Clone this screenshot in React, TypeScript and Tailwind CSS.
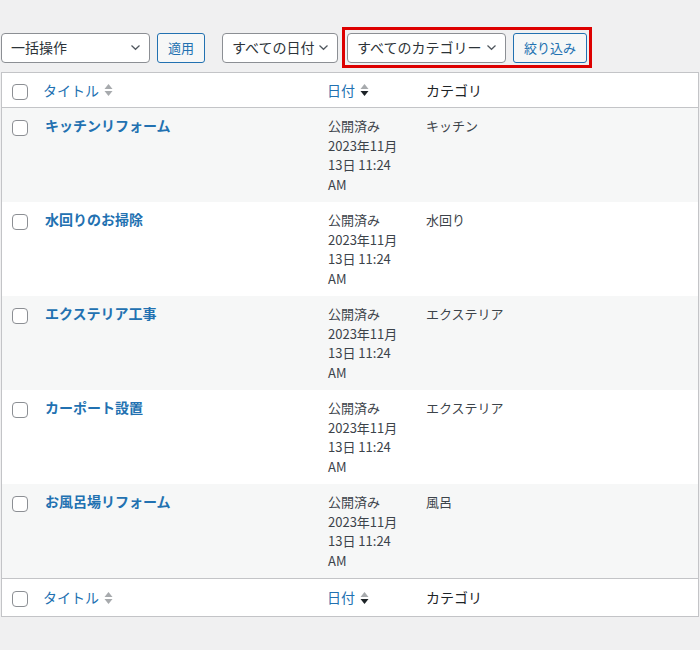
import React from "react";

const font = { fontFamily: '"Noto Sans CJK JP", "Noto Sans", sans-serif' };

type Post = { title: string; category: string };

const posts: Post[] = [
  { title: "キッチンリフォーム", category: "キッチン" },
  { title: "水回りのお掃除", category: "水回り" },
  { title: "エクステリア工事", category: "エクステリア" },
  { title: "カーポート設置", category: "エクステリア" },
  { title: "お風呂場リフォーム", category: "風呂" },
];

function Chevron() {
  return (
    <svg width="11" height="7" viewBox="0 0 11 7" className="shrink-0">
      <path d="M1.5 1.5 L5.5 5.3 L9.5 1.5" fill="none" stroke="#50575e" strokeWidth="1.2" />
    </svg>
  );
}

function Select({ label, width }: { label: string; width: string }) {
  return (
    <div
      className={`${width} flex h-[30px] items-center justify-between rounded-[4px] border border-[#8c8f94] bg-white pl-[9px] pr-[8px] text-[14px] text-[#2c3338]`}
    >
      <span className="whitespace-nowrap">{label}</span>
      <Chevron />
    </div>
  );
}

function Button({ label, width }: { label: string; width: string }) {
  return (
    <div
      className={`${width} flex h-[30px] items-center justify-center rounded-[3px] border border-[#2271b1] bg-[#f6f7f7] text-[13px] text-[#2271b1]`}
    >
      {label}
    </div>
  );
}

function Checkbox() {
  return <div className="h-[16px] w-[16px] rounded-[4px] border border-[#8c8f94] bg-white" />;
}

function SortIcon({ active }: { active?: boolean }) {
  return (
    <svg width="9" height="14" viewBox="0 0 9 14" className="ml-[5px] shrink-0">
      <polygon points="4.5,1 8.5,6 0.5,6" fill="#a7aaad" />
      <polygon points="4.5,13 8.5,8 0.5,8" fill={active ? "#1d2327" : "#a7aaad"} />
    </svg>
  );
}

function HeaderRow({ top }: { top?: boolean }) {
  const pad = top ? "py-[8px] leading-[18px]" : "py-[9px] leading-[19px]";
  return (
    <div
      className={`grid grid-cols-[31px_284px_99px_1fr] ${top ? "border-b" : "border-t"} border-[#c3c4c7] text-[14px]`}
    >
      <div className={`pl-[10px] ${top ? "pt-[11px]" : "pt-[12px]"}`}>
        <Checkbox />
      </div>
      <div className={`flex items-center pl-[10px] text-[#2271b1] ${pad}`}>
        タイトル
        <SortIcon />
      </div>
      <div className={`flex items-center pl-[10px] text-[#2271b1] ${pad}`}>
        日付
        <SortIcon active />
      </div>
      <div className={`pl-[10px] text-[#1d2327] ${pad}`}>カテゴリ</div>
    </div>
  );
}

export default function App() {
  return (
    <div className="min-h-[650px] bg-[#f0f0f1] px-[1px] pt-[27px]" style={font}>
      <div className="flex h-[41px] items-center">
        <Select label="一括操作" width="w-[149px]" />
        <div className="ml-[7px]">
          <Button label="適用" width="w-[48px]" />
        </div>
        <div className="ml-[17px]">
          <Select label="すべての日付" width="w-[116px]" />
        </div>
        <div className="ml-[4px] flex h-[41px] items-center gap-[7px] border-[3px] border-[#dd0000] px-[2px]">
          <Select label="すべてのカテゴリー" width="w-[159px]" />
          <Button label="絞り込み" width="w-[74px]" />
        </div>
      </div>

      <div className="mt-[4px] border border-[#c3c4c7] bg-white">
        <HeaderRow top />
        {posts.map((p, i) => (
          <div
            key={p.title}
            className={`grid grid-cols-[31px_284px_99px_1fr] ${i % 2 === 0 ? "bg-[#f6f7f7]" : "bg-white"}`}
          >
            <div className="pl-[10px] pt-[12px]">
              <Checkbox />
            </div>
            <div className="py-[8px] pl-[12px] text-[14px] font-semibold leading-[19.5px] text-[#2271b1]">
              {p.title}
            </div>
            <div className="py-[8px] pl-[11px] text-[13px] leading-[19.5px] text-[#3c434a]">
              <div>公開済み</div>
              <div>2023年11月</div>
              <div>13日 11:24</div>
              <div>AM</div>
            </div>
            <div className="py-[8px] pl-[10px] text-[13px] leading-[19.5px] text-[#3c434a]">
              {p.category}
            </div>
          </div>
        ))}
        <HeaderRow />
      </div>
    </div>
  );
}
